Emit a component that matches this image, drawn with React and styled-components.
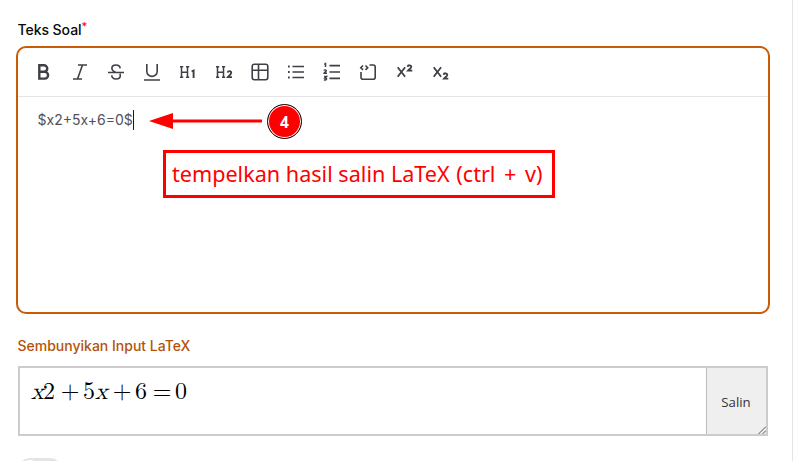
import React from 'react'
import styled, { createGlobalStyle } from 'styled-components'

const tools = [
  {
    name: 'Bold',
    icon: (
      <path strokeWidth='2.400' d='M7.300 5.300h4.700a3.200 3.200 0 0 1 0 6.500H7.300zM7.300 11.800h5.400a3.400 3.400 0 0 1 0 6.800H7.300z' />
    ),
  },
  { name: 'Italic', icon: <path d='M10 5h9M5 19h9M14.500 5l-5 14' /> },
  {
    name: 'Strike',
    icon: (
      <path d='M4 12.500h16M16.200 8.400C16 6.300 14.300 5 12 5 9.600 5 7.900 6.300 7.900 8.300c0 1.900 1.300 3.100 4.100 4.200M7.700 15.300c.2 2.300 1.900 3.700 4.300 3.700 2.500 0 4.300-1.400 4.300-3.500 0-.7-.2-1.300-.6-1.800' />
    ),
  },
  { name: 'Underline', icon: <path d='M6.800 4v7.200a5.200 5.200 0 0 0 10.400 0V4M4 20h16' /> },
  {
    name: 'Heading 1',
    icon: (
      <>
        <path strokeWidth='1.500' d='M5.500 7v10M11.500 7v10M5.500 12.200h6M4 6.800h3.200M10 6.800h3.200M4 17.300h3.200M10 17.300h3.200' />
        <path strokeWidth='1.900' d='M15.600 11.500l2-1v7.400' />
      </>
    ),
  },
  {
    name: 'Heading 2',
    icon: (
      <>
        <path strokeWidth='1.500' d='M5.500 7v10M11.500 7v10M5.500 12.200h6M4 6.800h3.200M10 6.800h3.200M4 17.300h3.200M10 17.300h3.200' />
        <path strokeWidth='1.900' d='M15.700 12.600c.2-2 3.500-2 3.500.2 0 1.500-2 2.500-3.300 4.300h4.100' />
      </>
    ),
  },
  {
    name: 'Table',
    icon: (
      <>
        <rect x='4.200' y='4.200' width='15.600' height='15.600' rx='2.200' />
        <path d='M4.200 10.300h15.600M10.500 4.200v15.600' />
      </>
    ),
  },
  {
    name: 'Bullet list',
    icon: (
      <>
        <path d='M8.500 6.500H20M8.500 12H20M8.500 17.500H20' />
        <path strokeWidth='1.900' d='M4 6.500h1.700M4 12h1.700M4 17.500h1.700' />
      </>
    ),
  },
  {
    name: 'Ordered list',
    icon: (
      <>
        <path d='M9.500 5.600H20M9.500 12H20M9.500 18.400H20' />
        <path strokeWidth='1.500' d='M4.300 4.300l1.200-.7v3.500M4 10.700c.2-1 2.300-1 2.300.1 0 .8-1.500 1.300-2.100 2.500h2.800M4.100 16.500h2.400L5 18c2.600-.1 1.700 2.700-1 1.800' />
      </>
    ),
  },
  {
    name: 'Code block',
    icon: (
      <>
        <path d='M13.500 5h3.700a2 2 0 0 1 2 2v10.200a2 2 0 0 1-2 2H7a2 2 0 0 1-2-2V12' />
        <path d='M7 5.500L4.800 7.700 7 9.900M9.500 5.500l2.200 2.200-2.200 2.200' />
      </>
    ),
  },
  {
    name: 'Superscript',
    icon: (
      <>
        <path strokeWidth='1.800' d='M5.700 7.300l7.400 9.500M13.100 7.300l-7.400 9.500' />
        <path strokeWidth='1.800' d='M15.600 6.800c.2-2.100 3.700-2 3.700.1 0 1.300-2 2.100-3.400 3.800h4.400' />
      </>
    ),
  },
  {
    name: 'Subscript',
    icon: (
      <>
        <path strokeWidth='1.800' d='M5.700 7.300l7.400 9.500M13.100 7.300l-7.400 9.500' />
        <path strokeWidth='1.800' d='M15.600 14.800c.2-2.100 3.700-2 3.700.1 0 1.300-2 2.100-3.400 3.800h4.400' />
      </>
    ),
  },
]

export default function App() {
  return (
    <Page>
      <GlobalStyle />
      <Panel>
        <Label>
          Teks Soal<sup>*</sup>
        </Label>
        <Editor>
          <Toolbar>
            {tools.map((tool) => (
              <Tool key={tool.name} aria-label={tool.name}>
                <svg viewBox='0 0 24 24'>{tool.icon}</svg>
              </Tool>
            ))}
          </Toolbar>
          <Content>
            <Typed>$x2+5x+6=0$</Typed>
            <Arrow viewBox='0 0 114 16'>
              <path d='M24 8h89' stroke='#f00' strokeWidth='3' />
              <path d='M0 8L24 0v16z' fill='#f00' />
            </Arrow>
            <Step>4</Step>
            <Note>
              tempelkan hasil salin LaTeX <span>(ctrl + v)</span>
            </Note>
          </Content>
        </Editor>
        <Toggle>Sembunyikan Input LaTeX</Toggle>
        <Formula>
          <Expression>
            <i>x</i>
            <span>2</span>
            <Operator>+</Operator>
            <span>5</span>
            <i>x</i>
            <Operator>+</Operator>
            <span>6</span>
            <Operator>=</Operator>
            <span>0</span>
          </Expression>
          <Copy>Salin</Copy>
          <Grip viewBox='0 0 8 8'>
            <path d='M0.500 8L8 .5M4.500 8L8 4.500' />
          </Grip>
        </Formula>
        <Switch>
          <Knob />
        </Switch>
      </Panel>
    </Page>
  )
}

const GlobalStyle = createGlobalStyle`
*{
  box-sizing:border-box;
}
body{
  margin:0;
  background:#fff;
  overflow:hidden;
}
`;

const Page = styled.main`
height:461px;
overflow:hidden;
font-family:Inter, "Liberation Sans", sans-serif;
`;

const Panel = styled.section`
width:793px;
height:461px;
padding:20px 22px 0 16px;
border-right:1px solid #e4e4e7;
overflow:hidden;
`;

const Label = styled.div`
height:26px;
padding-left:1.500px;
color:#09090b;
font-size:14px;
font-weight:500;
line-height:20px;
letter-spacing:-.05px;
sup{
  color:#f00;
  font-size:11px;
  line-height:0;
  vertical-align:5px;
}
`;

const Editor = styled.div`
height:268px;
border:2px solid #c95a06;
border-radius:10px;
`;

const Toolbar = styled.div`
display:flex;
gap:12px;
height:49px;
padding:12px 14px;
border-bottom:1px solid #e4e4e7;
`;

const Tool = styled.button`
width:24px;
height:24px;
padding:0;
border:0;
background:none;
svg{
  display:block;
  width:24px;
  height:24px;
  fill:none;
  stroke:#3f3f46;
  stroke-width:1.6;
}
`;

const Content = styled.div`
position:relative;
padding:12px 19.500px;
`;

const Typed = styled.span`
display:inline-block;
height:20px;
border-right:1px solid #18181b;
color:#52525b;
font-size:14px;
line-height:20px;
`;

const Arrow = styled.svg`
position:absolute;
left:131px;
top:16px;
width:114px;
height:16px;
`;

const Step = styled.span`
position:absolute;
left:249px;
top:6.500px;
width:35px;
height:35px;
border:1.500px solid #111;
border-radius:50%;
background:#f00;
box-shadow:inset 0 0 0 1px #fff;
color:#fff;
font:bold 15.500px/34px "Open Sans", sans-serif;
text-align:center;
`;

const Note = styled.div`
position:absolute;
left:145px;
top:53px;
width:392px;
height:48px;
padding-left:6px;
border:3px solid #f00;
color:#f00;
font:21.600px/41px "Noto Sans", sans-serif;
white-space:nowrap;
span{
  margin-left:1px;
  word-spacing:3px;
}
`;

const Toggle = styled.div`
height:52px;
padding:22px 1.500px 0;
color:#b45309;
font-size:14px;
font-weight:500;
line-height:20px;
`;

const Formula = styled.div`
position:relative;
display:flex;
width:750px;
height:70px;
margin-left:2px;
border:2px solid #ccc;
`;

const Expression = styled.div`
display:flex;
flex:1;
height:46px;
padding-left:11px;
color:#000;
font:24px/48px "Latin Modern Math", "Liberation Serif", serif;
i{
  width:12px;
}
span{
  width:12px;
}
`;

const Operator = styled.b`
width:28px;
padding-left:2px;
font-weight:400;
text-align:center;
`;

const Copy = styled.button`
width:60px;
padding:2px 1px 0 0;
border:0;
border-left:1px solid #bbb;
background:#efefef;
color:#333;
font:13.200px "Open Sans", sans-serif;
`;

const Grip = styled.svg`
position:absolute;
right:0;
bottom:0;
width:8px;
height:8px;
stroke:#555;
stroke-width:1;
`;

const Switch = styled.div`
width:44px;
height:24px;
margin:22px 0 0 2px;
padding:2px;
border-radius:12px;
background:#e4e4e7;
`;

const Knob = styled.div`
width:20px;
height:20px;
border-radius:50%;
background:#fff;
`;
